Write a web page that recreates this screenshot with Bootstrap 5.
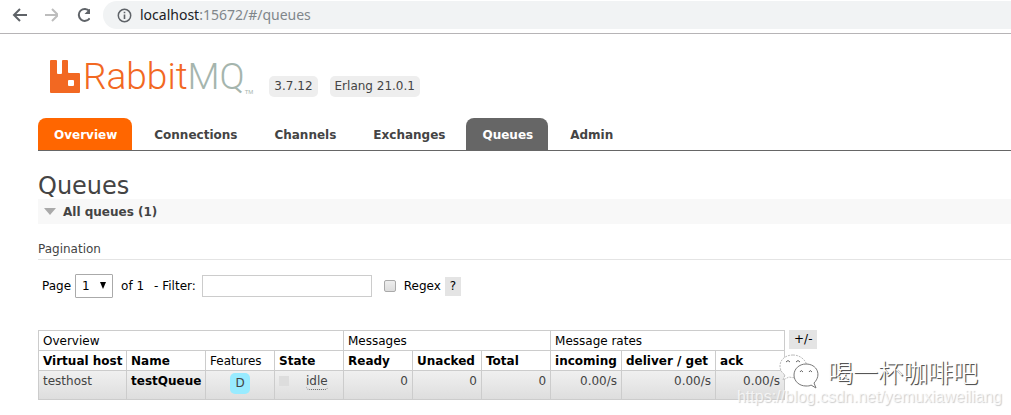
<!DOCTYPE html>
<html lang="en">
<head>
<meta charset="utf-8">
<meta name="viewport" content="width=device-width, initial-scale=1">
<title>RabbitMQ Management</title>
<link href="https://cdn.jsdelivr.net/npm/bootstrap@5.3.0/dist/css/bootstrap.min.css" rel="stylesheet">
<style>
body{font:12px/16px "DejaVu Sans",Verdana,sans-serif;color:#444;background:#fff}
.browser-bar{height:34px;padding:1px 0 4px 10px;border-bottom:1px solid #b6b4b6}
.browser-bar button{width:20px;height:20px}
.address{height:28px;margin-left:13px;padding-left:14px;border-radius:14px 0 0 14px;background:#f1f3f4}
.address-text{font:14px/20px "Noto Sans","Open Sans",sans-serif;color:#80868b;text-decoration:none}
.address-text b{font-weight:400;color:#202124}
.page-body{padding-left:38px}
.brand-row{height:84px;padding:22px 0 0 12px}
.brand-name{font:300 37px/42px Roboto,sans-serif;margin-left:3px;color:#f26822}
.brand-name span{color:#a5b5ad}
.brand-tm{font:6px/8px "Liberation Sans",sans-serif;color:#a5b5ad}
.version{background:#eee;border-radius:5px;padding:2px 5px;line-height:17px;margin-top:20px}
.version+.version{margin-left:12px}
.main-tabs{height:33px;gap:6px;border-bottom:1px solid #666}
.main-tabs .nav-link{padding:9px 15px 7px 16px;color:#444;font-weight:700;border-radius:8px 8px 0 0;line-height:16px}
.main-tabs .nav-link.tab-hot{background:#f60;color:#fff}
.main-tabs .nav-link.active{background:#666;color:#fff}
h1{font:24px/26px "DejaVu Sans",Verdana,sans-serif;margin:22px 0 0}
.section-head{height:25px;padding:0 0 0 6px;gap:7px;background:#f8f8f8;border:0;color:#444;font-weight:700;text-align:left}
.pagination-title{font:12px/20px "DejaVu Sans",Verdana,sans-serif;margin:15px 0 0;border-bottom:1px solid #e4e4e4}
.filter-row{padding:13px 0 0 4px;height:39px;color:#000}
.page-select{width:38px;height:24px;padding:0 6px;border:1px solid #aaa;border-radius:1px;background:#fff;appearance:none;color:#000}
.page-picker svg{right:7px;top:8px;pointer-events:none}
.filter-box{width:170px;height:22px;border:1px solid #ccc;padding:2px}
.filter-label{margin:0 6px 0 10px}
.regex-box{appearance:none;width:12px;height:12px;margin:0 8px 0 12px;border:1px solid #aaa;border-radius:2px;background:linear-gradient(#eee,#ddd)}
.mini-btn{background:#e4e4e4;border:0;padding:1px 5px;height:19px;line-height:17px;color:#000}
.list-area{margin-top:31px;min-height:84px}
.queue-list{width:747px;table-layout:fixed;border-collapse:collapse;color:#000;flex:none}
.queue-list th,.queue-list td{border:1px solid #ccc;padding:3px 4px 1px;height:20px;line-height:15px;white-space:nowrap;font-weight:400;vertical-align:top}
.queue-list .sortable{font-weight:700}
.queue-list tbody tr{background:linear-gradient(#f0f0f0,#ddd)}
.queue-list tbody td{height:29px;color:#444}
.queue-list tbody td.feature-cell{padding-top:2px}
.queue-list tbody a{color:#000;font-weight:700;text-decoration:none}
.w-host{width:88px}.w-name{width:79px}.w-std{width:69px}.w-in{width:71px}.w-get{width:94px}
.feature{display:inline-block;width:20px;height:21px;line-height:21px;border-radius:5px;background:#98ebff}
.state-dot{width:10px;height:10px;background:#ddd;margin-top:2px}
.state-name{border-bottom:1px dotted #666;border-radius:0 0 4px 4px;line-height:15px;margin-left:17px}
.watermark{right:9px;top:22px;pointer-events:none}
.watermark-name{font:25px/34px "Noto Sans CJK SC",sans-serif;font-weight:300;color:#fff;text-shadow:1px 1px 0 #555,1px 1px 1px #777}
.watermark-url{font:16px/18px "Liberation Sans",sans-serif;margin-top:-2px;color:rgba(255,255,255,.7);text-shadow:1px 1px 1px #ccc}
</style>
</head>
<body>
<header class="browser-bar d-flex align-items-center">
  <button class="btn p-0 border-0 d-flex" aria-label="Back"><svg width="20" height="20" fill="none" stroke="#5f6368" stroke-width="2"><path d="M17 10H4M10 4L4 10l6 6"/></svg></button>
  <button class="btn p-0 border-0 d-flex ms-2 me-2" aria-label="Forward"><svg class="ms-1" width="20" height="20" fill="none" stroke="#bdbdbd" stroke-width="2"><path d="M3 10h13M10 4l6 6-6 6"/></svg></button>
  <button class="btn p-0 border-0 d-flex ms-1" aria-label="Reload"><svg class="ms-1" width="20" height="20"><path d="M15.700 13.400A6 6 0 1 1 15.400 6" fill="none" stroke="#5f6368" stroke-width="2"/><path d="M17 2.500V9h-6.500z" fill="#5f6368"/></svg></button>
  <div class="address d-flex align-items-center flex-grow-1">
    <svg class="me-2" width="15" height="15"><circle cx="7.500" cy="7.500" r="6.200" fill="none" stroke="#5f6368" stroke-width="1.500"/><path d="M7.500 6.500v4.500M7.500 3.800v1.500" stroke="#5f6368" stroke-width="1.600"/></svg>
    <a class="address-text" href="#/queues"><b>localhost</b>:15672/#/queues</a>
  </div>
</header>
<main class="page-body">
  <div class="brand-row d-flex align-items-start">
    <svg class="mt-1" width="30" height="34"><path fill="#f26822" fill-rule="evenodd" d="M1 0h5q1 0 1 1v12q0 1 1 1h3q1 0 1-1V1q0-1 1-1h4q1 0 1 1v11q0 1 1 1h10q1 0 1 1v18q0 1-1 1H1q-1 0-1-1V1q0-1 1-1zM19 20q-1 0-1 1v4q0 1 1 1h4q1 0 1-1v-4q0-1-1-1z"/></svg>
    <div class="brand-name">Rabbit<span>MQ</span></div><span class="brand-tm mt-4 pt-2">TM</span>
    <span class="version ms-3">3.7.12</span>
    <span class="version">Erlang 21.0.1</span>
  </div>
  <nav class="nav main-tabs flex-nowrap">
    <a class="nav-link tab-hot" href="#/">Overview</a>
    <a class="nav-link" href="#/connections">Connections</a>
    <a class="nav-link" href="#/channels">Channels</a>
    <a class="nav-link" href="#/exchanges">Exchanges</a>
    <a class="nav-link active" href="#/queues">Queues</a>
    <a class="nav-link" href="#/users">Admin</a>
  </nav>
  <h1>Queues</h1>
  <button class="section-head w-100 d-flex align-items-center"><svg width="12" height="7"><path d="M0 0h12L6 7z" fill="#aaa"/></svg>All queues (1)</button>
  <h2 class="pagination-title">Pagination</h2>
  <form class="filter-row d-flex align-items-center">
    <label for="page">Page</label>
    <span class="page-picker position-relative ms-1"><select id="page" class="page-select"><option>1</option></select><svg class="position-absolute" width="6" height="7"><path d="M0 0h6L3 7z"/></svg></span>
    <span class="ms-2">of 1</span>
    <label class="filter-label" for="filter">- Filter:</label>
    <input id="filter" class="filter-box" type="text">
    <input id="regex" class="regex-box" type="checkbox">
    <label for="regex">Regex</label>
    <button type="button" class="mini-btn ms-1">?</button>
  </form>
  <div class="list-area position-relative d-flex align-items-start">
    <table class="queue-list">
      <colgroup><col class="w-host"><col class="w-name"><col class="w-std"><col class="w-std"><col class="w-std"><col class="w-std"><col class="w-std"><col class="w-in"><col class="w-get"><col class="w-std"></colgroup>
      <thead>
        <tr><th colspan="4">Overview</th><th colspan="3">Messages</th><th colspan="3">Message rates</th></tr>
        <tr><th class="sortable">Virtual host</th><th class="sortable">Name</th><th>Features</th><th class="sortable">State</th><th class="sortable">Ready</th><th class="sortable">Unacked</th><th class="sortable">Total</th><th class="sortable">incoming</th><th class="sortable">deliver / get</th><th class="sortable">ack</th></tr>
      </thead>
      <tbody>
        <tr><td>testhost</td><td><a href="#/queues/testhost/testQueue">testQueue</a></td><td class="feature-cell text-center"><span class="feature">D</span></td><td><div class="d-flex align-items-start"><span class="state-dot"></span><span class="state-name">idle</span></div></td><td class="text-end">0</td><td class="text-end">0</td><td class="text-end">0</td><td class="text-end">0.00/s</td><td class="text-end">0.00/s</td><td class="text-end">0.00/s</td></tr>
      </tbody>
    </table>
    <button type="button" class="mini-btn ms-1">+/-</button>
    <div class="watermark position-absolute">
      <div class="d-flex align-items-center justify-content-end me-4">
        <svg class="me-2" width="42" height="38"><path fill="#fff" stroke="#bbb" stroke-dasharray="2 1" d="M15 3C7 3 2 8 2 14c0 4 2 7 5 9l-2 5 6-3c13 3 19-4 18-11C28 8 22 3 15 3z"/><path fill="#fff" stroke="#777" d="M28 12c-7 0-12 5-12 11s5 11 12 11c2 0 4 0 5-1l5 3-2-5c8-8 3-19-8-19z"/><path d="M8 10q2-3 4 0M18 10q2-3 4 0M22 20q1-3 3 0M31 20q1-3 3 0" fill="none" stroke="#666"/></svg>
        <span class="watermark-name">喝一杯咖啡吧</span>
      </div>
      <div class="watermark-url">https://blog.csdn.net/yemuxiaweiliang</div>
    </div>
  </div>
</main>
<script src="https://cdn.jsdelivr.net/npm/bootstrap@5.3.0/dist/js/bootstrap.bundle.min.js"></script>
</body>
</html>
